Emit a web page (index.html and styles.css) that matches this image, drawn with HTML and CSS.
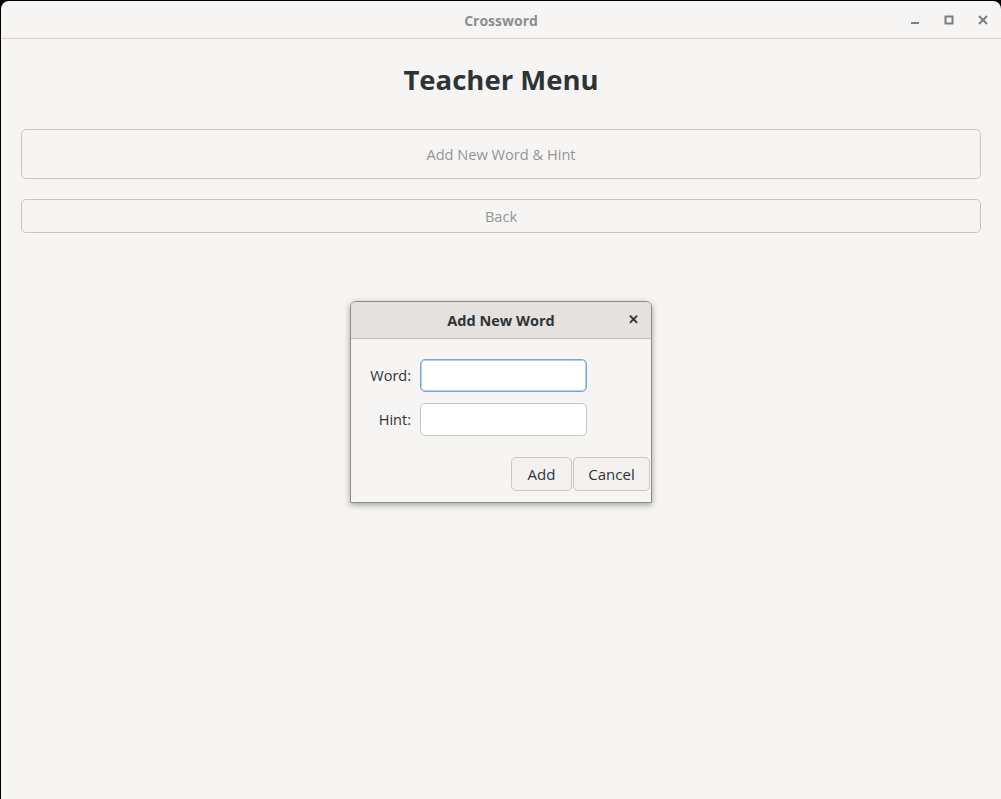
FILE: index.html
```html
<!DOCTYPE html>
<html>
<head>
<meta charset="utf-8">
<link rel="stylesheet" href="styles.css">
</head>
<body>
<div class="window">
  <header class="titlebar">
    <div class="title">Crossword</div>
    <div class="controls">
      <span class="ctl"><svg width="16" height="16" viewBox="0 0 16 16"><rect x="4" y="10" width="8" height="2" fill="#7b7e7f"/></svg></span>
      <span class="ctl"><svg width="16" height="16" viewBox="0 0 16 16"><rect x="4.5" y="4.5" width="7" height="7" fill="none" stroke="#7b7e7f" stroke-width="2"/></svg></span>
      <span class="ctl"><svg width="16" height="16" viewBox="0 0 16 16"><path d="M4 4 L12 12 M12 4 L4 12" stroke="#7b7e7f" stroke-width="2"/></svg></span>
    </div>
  </header>
  <main class="content">
    <h1 class="heading">Teacher Menu</h1>
    <button class="btn big">Add New Word &amp; Hint</button>
    <button class="btn small">Back</button>
  </main>
  <div class="dialog">
    <div class="dlg-head">
      <span class="dlg-title">Add New Word</span>
      <span class="dlg-close">✕</span>
    </div>
    <div class="dlg-body">
      <div class="form">
        <label class="lbl">Word:</label>
        <div class="input focused"></div>
        <label class="lbl">Hint:</label>
        <div class="input"></div>
      </div>
      <div class="actions">
        <button class="dbtn add">Add</button>
        <button class="dbtn cancel">Cancel</button>
      </div>
    </div>
  </div>
</div>
</body>
</html>
```
FILE: styles.css
```css
html, body {
  margin: 0;
  padding: 0;
  background: #000;
  width: 1001px;
  height: 799px;
  overflow: hidden;
}
.window {
  position: relative;
  margin: 1px 0 0 1px;
  width: 1000px;
  height: 798px;
  background: #f6f5f4;
  border-radius: 8px 8px 0 0;
  font-family: "Open Sans", sans-serif;
  color: #2e3436;
}
.titlebar {
  height: 37px;
  border-bottom: 1px solid #d6d1cd;
  display: flex;
  align-items: center;
  justify-content: center;
  position: relative;
}
.title {
  font-size: 14px;
  font-weight: 700;
  color: #8b8e8f;
  margin-top: 1px;
}
.controls {
  position: absolute;
  right: 10px;
  top: 11px;
  display: flex;
  gap: 18px;
}
.ctl {
  width: 16px;
  height: 16px;
  display: block;
}
.ctl svg { display: block; }
.content {
  padding: 0 20px 0 20px;
  display: flex;
  flex-direction: column;
}
.heading {
  margin: 21px 0 0 0;
  text-align: center;
  font-size: 27.5px;
  font-weight: 700;
  line-height: 40px;
  color: #2e3436;
}
.btn {
  font-family: "Open Sans", sans-serif;
  font-size: 14.6px;
  color: #939595;
  background: #f6f5f4;
  border: 1px solid #cdc7c2;
  border-radius: 5px;
  padding: 0;
}
.big {
  height: 50px;
  margin-top: 29px;
}
.small {
  height: 34px;
  margin-top: 20px;
}
.dialog {
  position: absolute;
  left: 349px;
  top: 300px;
  width: 300px;
  height: 200px;
  border: 1px solid #8e8c89;
  border-radius: 6px 6px 0 0;
  background: #f6f5f4;
  box-shadow: 0 2px 6px rgba(0,0,0,0.35);
}
.dlg-head {
  height: 36px;
  border-bottom: 1px solid #c0bcb8;
  background: #e4e1de;
  border-radius: 5px 5px 0 0;
  display: flex;
  align-items: center;
  justify-content: center;
  position: relative;
}
.dlg-title {
  font-size: 14.5px;
  font-weight: 700;
  color: #2e3436;
}
.dlg-close {
  position: absolute;
  right: 12px;
  top: 8px;
  font-size: 13px;
  font-weight: 700;
  color: #2e3436;
}
.dlg-body {
  padding: 20px 0 0 20px;
}
.form {
  display: grid;
  grid-template-columns: 40px 167px;
  column-gap: 9px;
  row-gap: 11px;
  align-items: center;
}
.lbl {
  justify-self: end;
  font-size: 14.5px;
  color: #2e3436;
}
.input {
  height: 31px;
  background: #fff;
  border: 1px solid #cdc7c2;
  border-radius: 5px;
}
.input.focused {
  border-color: #7fa5d5;
  box-shadow: inset 0 0 0 1px #b6cbe6;
}
.actions {
  display: flex;
  justify-content: flex-end;
  gap: 1px;
  margin-top: 21px;
  padding-right: 1px;
}
.dbtn {
  font-family: "Open Sans", sans-serif;
  font-size: 15px;
  color: #2e3436;
  height: 34px;
  background: #f3f2f0;
  border: 1px solid #cdc7c2;
  border-radius: 5px;
  padding: 0;
}
.add { width: 61px; }
.cancel { width: 77px; }
```
